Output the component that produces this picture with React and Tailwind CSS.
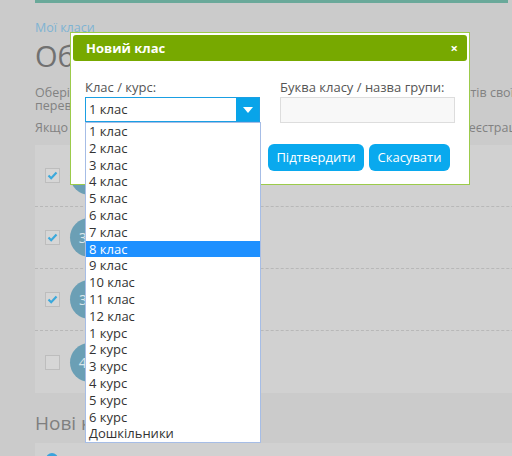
import React from "react";

const grades = [
  "1 клас", "2 клас", "3 клас", "4 клас", "5 клас", "6 клас", "7 клас", "8 клас",
  "9 клас", "10 клас", "11 клас", "12 клас", "1 курс", "2 курс", "3 курс", "4 курс",
  "5 курс", "6 курс", "Дошкільники",
];

const rows = [
  { checked: true, num: "2-А" },
  { checked: true, num: "3-А" },
  { checked: true, num: "3-Б" },
  { checked: false, num: "4-А" },
];

function Check({ checked }) {
  return (
    <div className="w-[15px] h-[15px] border border-[#bdbdbd] bg-[#d6d6d6] flex items-center justify-center shrink-0">
      {checked && (
        <svg width="11" height="9" viewBox="0 0 11 9">
          <path d="M1.5 4.5 L4.2 7.2 L9.5 1.5" fill="none" stroke="#3ba9dc" strokeWidth="2.2" />
        </svg>
      )}
    </div>
  );
}

export default function App() {
  return (
    <div className="relative w-[512px] h-[456px] overflow-hidden bg-[#cbcbcb] font-['Open_Sans',sans-serif]">
      <div className="ml-[35px] w-[720px]">
        <div className="h-[3px] w-[473px] bg-[#6aa99a]" />
        <a className="block mt-[17px] text-[12.5px] leading-[16px] text-[#7eb3d3]">Мої класи</a>
        <h1 className="mt-[2px] text-[29px] leading-[36px] text-[#717171]">Обрати класи</h1>
        <div className="mt-[12px] text-[12.5px] leading-[13px] text-[#828282] whitespace-nowrap">
          <p>Оберіть класи, у яких Ви викладаєте, щоби переглядати результати тестів своїх учнів та</p>
          <p>перевіряти їхні домашні завдання.</p>
          <p className="mt-[9px]">Якщо Вашого класу нема у списку, додайте його. Клас з'явиться після реєстрації нових учнів.</p>
        </div>

        <div className="mt-[11px] bg-[#d1d1d1]">
          {rows.map((r, i) => (
            <div
              key={i}
              className={
                "h-[62px] flex items-center gap-[10px] pl-[10px] " +
                (i < rows.length - 1 ? "border-b border-dashed border-[#b8b8b8]" : "")
              }
            >
              <Check checked={r.checked} />
              <div className="w-[39px] h-[39px] rounded-full bg-[#6b9fb5] flex items-center justify-center text-[14px] text-[#dbe7ec]">
                {r.num}
              </div>
              <span className="text-[15px] text-[#6f6f6f]">{r.num} клас</span>
            </div>
          ))}
        </div>

        <h2 className="mt-[17px] text-[19px] leading-[26px] text-[#7f7f7f]">Нові класи</h2>
        <div className="mt-[7px] h-[40px] bg-[#d1d1d1] pl-[11px] pt-[10px]">
          <div className="w-[12px] h-[12px] rounded-full bg-[#3aa3dc]" />
        </div>
      </div>

      {/* modal */}
      <div className="absolute left-[70px] top-[32px] w-[400px] h-[153px] bg-white border border-[#9ccb4a] p-[2px]">
        <div className="h-[26px] rounded-[3px] bg-[#77a900] flex items-center justify-between pl-[13px] pr-[9px]">
          <span className="text-[13px] font-bold text-white leading-none">Новий клас</span>
          <span className="text-[13px] font-bold text-white leading-none">×</span>
        </div>
        <div className="flex gap-[20px] pl-[12px] pt-[18px]">
          <div className="w-[175px]">
            <div className="text-[13px] leading-[16px] text-[#555]">Клас / курс:</div>
            <div className="mt-[2px] h-[25px] border border-[#1a9fe3] flex">
              <div className="flex-1 pl-[3px] text-[13px] leading-[23px] text-[#333]">1 клас</div>
              <div className="w-[23px] bg-[#08a4e9] flex items-center justify-center">
                <svg width="10" height="6" viewBox="0 0 10 6">
                  <path d="M0 0 H10 L5 6 Z" fill="#fff" />
                </svg>
              </div>
            </div>
          </div>
          <div className="w-[175px]">
            <div className="text-[13px] leading-[16px] text-[#555]">Буква класу / назва групи:</div>
            <div className="mt-[2px] h-[26px] border border-[#dddddd] bg-[#f8f8f8]" />
          </div>
        </div>
        <div className="flex gap-[5px] pl-[195px] mt-[21px]">
          <button className="h-[27px] w-[96px] rounded-[6px] bg-[#09a9ee] text-white text-[13px]">Підтвердити</button>
          <button className="h-[27px] w-[81px] rounded-[6px] bg-[#09a9ee] text-white text-[13px]">Скасувати</button>
        </div>
      </div>

      {/* open select list */}
      <div className="absolute left-[85px] top-[122px] w-[176px] bg-white border border-[#a6bde6]">
        {grades.map((g) => (
          <div
            key={g}
            className={
              "h-[16.8px] pl-[3px] text-[13px] leading-[16.8px] " +
              (g === "8 клас" ? "bg-[#1e90ff] text-white" : "text-[#333]")
            }
          >
            {g}
          </div>
        ))}
      </div>
    </div>
  );
}
